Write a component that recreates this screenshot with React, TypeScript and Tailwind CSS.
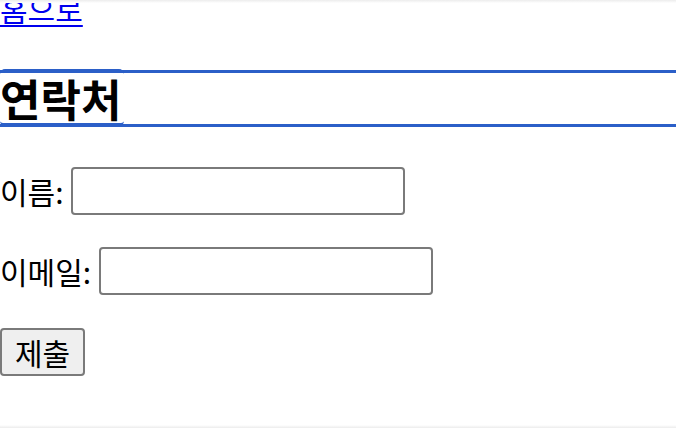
export default function App() {
  return (
    <div
      className="relative w-[676px] h-[428px] overflow-hidden bg-white text-black"
      style={{ fontFamily: '"Noto Sans CJK KR", "Noto Sans", sans-serif' }}
    >
      {/* Back link (page is scrolled slightly, so it is cut at the top) */}
      <div className="-mt-[12px] text-[30px] leading-[40px]">
        <a href="#" className="text-[#0000ee] underline decoration-2 underline-offset-[4px]">
          홈으로
        </a>
      </div>

      {/* Heading with focus ring */}
      <h2 className="relative mt-[42px] border-y-[3px] border-[#2b5fc8] text-[44px] font-bold leading-[51px]">
        연락처
        <span className="pointer-events-none absolute left-0 -top-[4px] h-[57px] w-[124px] rounded-[5px] border-y-[3px] border-[#2b5fc8]" />
      </h2>

      <form className="flex flex-col">
        <div className="mt-[40px] flex h-[48px] items-center text-[30px]">
          <label htmlFor="name">이름:</label>
          <input
            id="name"
            type="text"
            className="ml-[7px] h-[48px] w-[334px] rounded-[4px] border-2 border-[#7a7a7a] bg-white"
          />
        </div>

        <div className="mt-[32px] flex h-[48px] items-center text-[30px]">
          <label htmlFor="email">이메일:</label>
          <input
            id="email"
            type="email"
            className="ml-[8px] h-[48px] w-[334px] rounded-[4px] border-2 border-[#7a7a7a] bg-white"
          />
        </div>

        <div className="mt-[33px] flex">
          <button
            type="submit"
            className="flex h-[48px] w-[85px] items-center justify-center rounded-[4px] border-2 border-[#7a7a7a] bg-[#efefef] text-[30px] leading-none"
          >
            제출
          </button>
        </div>
      </form>

      {/* Viewport edge shading */}
      <div className="pointer-events-none absolute left-0 top-0 h-[3px] w-full bg-gradient-to-b from-[#ececec] to-white" />
      <div className="pointer-events-none absolute bottom-0 left-0 h-[3px] w-full bg-gradient-to-t from-[#ececec] to-white" />
    </div>
  );
}
